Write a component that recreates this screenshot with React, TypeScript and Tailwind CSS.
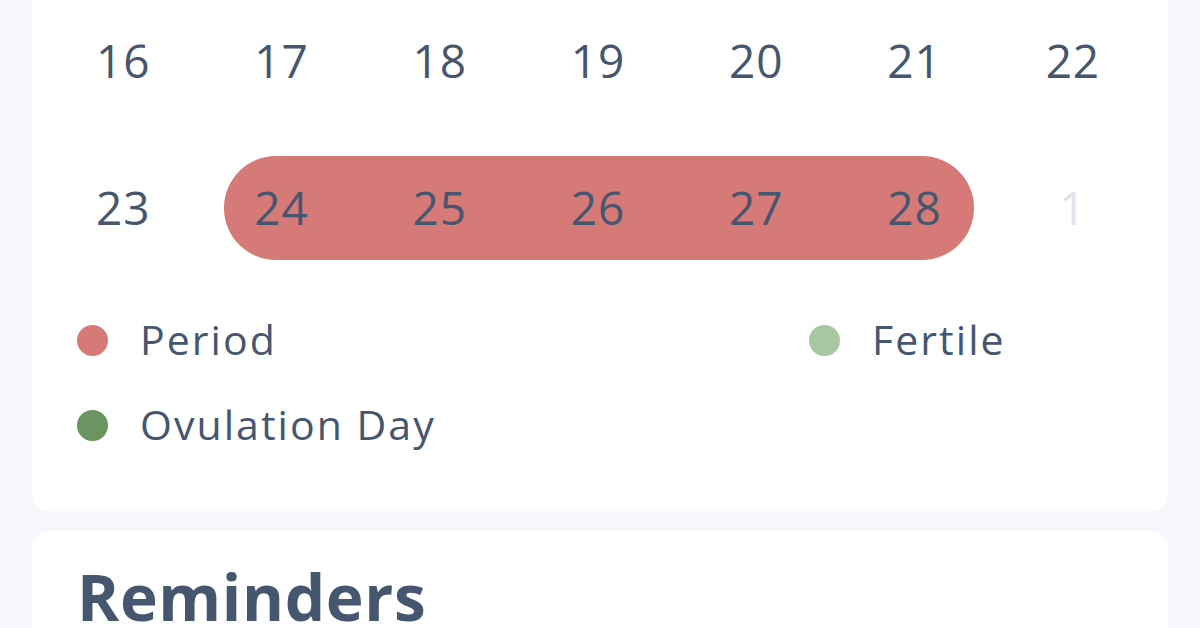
const ROW1 = [16, 17, 18, 19, 20, 21, 22]
const ROW2 = [
  { d: 23 },
  { d: 24, period: "start" },
  { d: 25, period: "mid" },
  { d: 26, period: "mid" },
  { d: 27, period: "mid" },
  { d: 28, period: "end" },
  { d: 1, muted: true },
]

const LEGEND = [
  { label: "Period", color: "bg-[#d57a77]" },
  { label: "Fertile", color: "bg-[#a9c6a3]" },
  { label: "Ovulation Day", color: "bg-[#6a9460]" },
]

export default function App() {
  return (
    <div className="w-[1200px] h-[628px] overflow-hidden bg-[#f7f8fc] px-[32px] font-['Open_Sans',sans-serif] text-[#46566f]">
      {/* Calendar card (top is scrolled off) */}
      <div className="bg-white rounded-b-[18px] pt-[8px] pb-[61px]">
        <div className="grid grid-cols-7 pl-[12px] pr-[16px]">
          {ROW1.map((d) => (
            <div key={d} className="h-[104px] flex items-center justify-center text-[46px] tracking-[0.02em]">
              {d}
            </div>
          ))}
        </div>

        <div className="grid grid-cols-7 pl-[12px] pr-[16px] mt-[44px]">
          {ROW2.map((c) => (
            <div key={c.d} className="relative h-[104px] flex items-center justify-center text-[46px] tracking-[0.02em]">
              {c.period === "start" && (
                <div className="absolute inset-y-0 left-[22px] right-0 rounded-l-full bg-[#d57a77]" />
              )}
              {c.period === "mid" && <div className="absolute inset-0 bg-[#d57a77]" />}
              {c.period === "end" && (
                <div className="absolute inset-y-0 left-0 right-[20px] rounded-r-full bg-[#d57a77]" />
              )}
              <span className={`relative -mt-[2px] ${c.muted ? "text-[#dde4ec]" : ""}`}>{c.d}</span>
            </div>
          ))}
        </div>

        {/* Legend */}
        <div className="grid grid-cols-[732px_1fr] gap-y-[35px] pl-[45px] mt-[55px]">
          {LEGEND.map((l) => (
            <div key={l.label} className="h-[50px] flex items-center gap-[32px]">
              <span className={`w-[31px] h-[31px] rounded-full ${l.color}`} />
              <span className="text-[41px] tracking-[0.05em]">{l.label}</span>
            </div>
          ))}
        </div>
      </div>

      {/* Reminders card */}
      <div className="bg-white rounded-t-[18px] mt-[20px] h-[200px] pt-[28px] px-[45px]">
        <h2 className="text-[64px] font-bold leading-[1.2] tracking-[0.01em]">Reminders</h2>
      </div>
    </div>
  )
}
